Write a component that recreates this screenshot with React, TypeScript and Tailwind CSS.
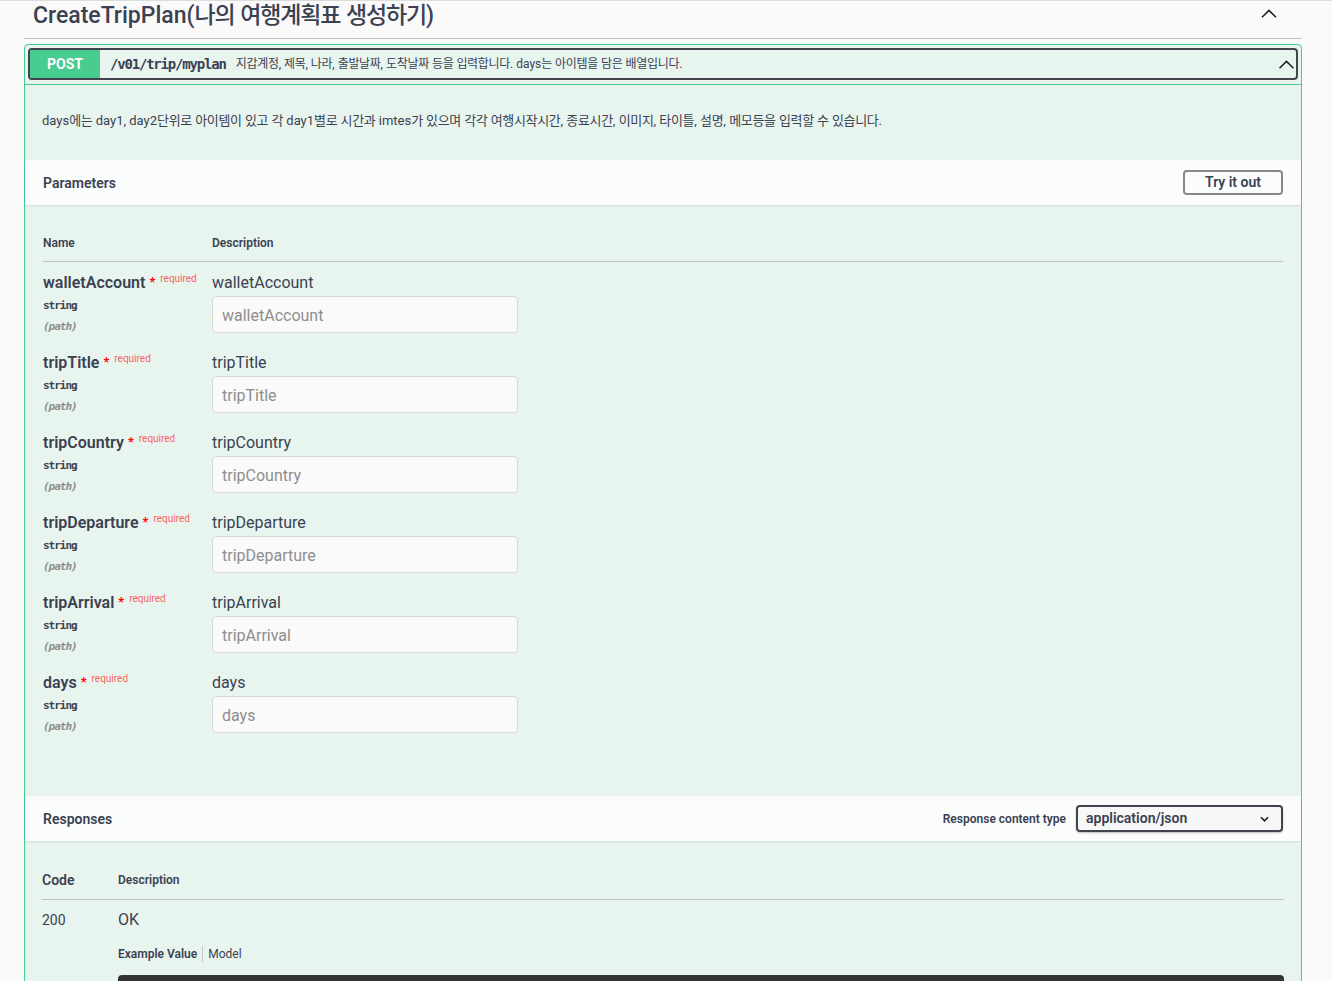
import React from "react";

const KO = /([\u1100-\u11FF\u3130-\u318F\uAC00-\uD7A3]+)/;

function T({ children, tight }: { children: string; tight?: boolean }) {
  const parts = children.split(KO);
  return (
    <>
      {parts.map((p, i) =>
        i % 2 === 1 ? (
          <span key={i} className={tight ? "tracking-[-0.05em]" : "tracking-[-0.025em]"}>
            {p}
          </span>
        ) : (
          <React.Fragment key={i}>{p}</React.Fragment>
        )
      )}
    </>
  );
}

function ChevUp({ className }: { className?: string }) {
  return (
    <svg viewBox="0 0 16 9" className={className} fill="none" stroke="currentColor" strokeWidth="1.6">
      <polyline points="1,8.2 8,1.4 15,8.2" />
    </svg>
  );
}

const params = ["walletAccount", "tripTitle", "tripCountry", "tripDeparture", "tripArrival", "days"];

function ParamRow({ name }: { name: string }) {
  return (
    <div className="flex h-[80px]">
      <div className="w-[169px] pt-[11px]">
        <div className="flex h-[20px] items-start">
          <span className="text-[16px] font-semibold leading-[20px]">{name}</span>
          <span className="ml-[4px] mt-[2px] text-[13px] font-bold leading-[14px] text-[#ff0000]">*</span>
          <span className="ml-[5px] mt-[0px] text-[10px] leading-[12px] text-[#f66363]">required</span>
        </div>
        <div className="mt-[5px] font-['DejaVu_Sans_Mono',monospace] text-[11px] font-bold leading-[16px] tracking-[-1px]">
          string
        </div>
        <div className="mt-[5px] font-['DejaVu_Sans_Mono',monospace] text-[11px] font-bold italic leading-[16px] tracking-[-1px] text-[#8c8c8c]">
          (path)
        </div>
      </div>
      <div className="pt-[11px]">
        <div className="text-[16px] leading-[20px]">{name}</div>
        <input
          readOnly
          placeholder={name}
          className="mt-[3px] h-[37px] w-[306px] rounded-[4px] border border-[#d9d9d9] bg-[#fafafa] px-[9px] pt-[1px] text-[16px] text-[#3b4151] outline-none placeholder:text-[#8e8e8e]"
        />
      </div>
    </div>
  );
}

export default function App() {
  return (
    <div className="min-h-screen bg-[#fafafa] font-['Roboto','Noto_Sans_CJK_KR',sans-serif] text-[#3b4151]">
      <div className="h-[2px] border-t border-[#dcdcdc] mt-[0px]" />
      <div className="ml-[24px] w-[1278px]">
        {/* tag title */}
        <div className="flex h-[37px] items-start justify-between border-b border-[#c3c5ca] pl-[9px] pr-[25px]">
          <h2 className="mt-[-1px] text-[23px] font-medium leading-[30px]">
            <T tight>CreateTripPlan(나의 여행계획표 생성하기)</T>
          </h2>
          <ChevUp className="mt-[7px] h-[9px] w-[16px] text-[#222]" />
        </div>

        {/* opblock */}
        <div className="mt-[5px] rounded-[4px] border border-[#49cc90] bg-[#e8f5ef]">
          <div className="border-b border-[#49cc90] px-[3px] pb-[4px] pt-[3px]">
            <div className="flex h-[32px] items-center rounded-[4px] border-2 border-[#41444e]">
              <div className="flex h-[28px] w-[70px] items-center justify-center rounded-l-[2px] bg-[#49cc90] text-[14px] font-bold text-white">
                POST
              </div>
              <span className="ml-[10px] font-['DejaVu_Sans_Mono',monospace] text-[14px] font-bold tracking-[-1.2px] text-[#3b4151]">
                /v01/trip/myplan
              </span>
              <span className="ml-[10px] text-[12px] text-[#3b4151]">
                <T>지갑계정, 제목, 나라, 출발날짜, 도착날짜 등을 입력합니다. days는 아이템을 담은 배열입니다.</T>
              </span>
              <ChevUp className="ml-auto mr-[1px] h-[9px] w-[17px] text-[#222]" />
            </div>
          </div>

          {/* description */}
          <div className="px-[17px] pb-[29px] pt-[26px] text-[13px] leading-[20px]">
            <T>
              days에는 day1, day2단위로 아이템이 있고 각 day1별로 시간과 imtes가 있으며 각각 여행시작시간, 종료시간, 이미지, 타이틀, 설명, 메모등을 입력할 수 있습니다.
            </T>
          </div>

          {/* parameters header */}
          <div className="flex h-[45px] items-center justify-between bg-white/80 px-[18px] shadow-[0_1px_2px_rgba(0,0,0,0.1)]">
            <span className="mt-[2px] text-[14px] font-semibold">Parameters</span>
            <button className="h-[25px] w-[100px] rounded-[4px] border-2 border-[#888] text-[14px] font-semibold text-[#3b4151]">
              Try it out
            </button>
          </div>

          {/* parameters table */}
          <div className="px-[18px] pb-[54px] pt-[20px]">
            <div className="flex h-[37px] items-center border-b border-[#bcc3c1] text-[12px] font-semibold">
              <span className="w-[169px]">Name</span>
              <span>Description</span>
            </div>
            {params.map((p) => (
              <ParamRow key={p} name={p} />
            ))}
          </div>

          {/* responses header */}
          <div className="flex h-[45px] items-center justify-between bg-white/80 px-[18px] shadow-[0_1px_2px_rgba(0,0,0,0.1)]">
            <span className="mt-[2px] text-[14px] font-semibold">Responses</span>
            <div className="flex items-center">
              <span className="mr-[10px] text-[12px] font-semibold">Response content type</span>
              <div className="flex h-[27px] w-[207px] items-center justify-between rounded-[4px] border-2 border-[#41444e] bg-[#f7f7f7] pl-[8px] pr-[12px] shadow-[0_1px_2px_rgba(0,0,0,0.25)]">
                <span className="text-[14px] font-semibold">application/json</span>
                <svg viewBox="0 0 10 6" className="h-[6px] w-[9px]" fill="none" stroke="#222" strokeWidth="1.8">
                  <polyline points="1,1 5,5 9,1" />
                </svg>
              </div>
            </div>
          </div>

          {/* responses table */}
          <div className="px-[17px] pt-[20px]">
            <div className="flex h-[39px] items-center border-b border-[#bcc3c1]">
              <span className="w-[76px] text-[14px] font-semibold">Code</span>
              <span className="text-[12px] font-semibold">Description</span>
            </div>
            <div className="flex pt-[10px]">
              <div className="w-[76px] text-[14px] leading-[20px]">200</div>
              <div className="flex-1">
                <div className="text-[16px] leading-[20px]">OK</div>
                <div className="mt-[16px] flex h-[16px] items-center text-[12px]">
                  <span className="font-semibold">Example Value</span>
                  <span className="mx-[5px] h-[16px] w-px bg-[#c7c7c7]" />
                  <span>Model</span>
                </div>
                <div className="mt-[13px] h-[40px] rounded-[4px] bg-[#333333]" />
              </div>
            </div>
          </div>
        </div>
      </div>
    </div>
  );
}
